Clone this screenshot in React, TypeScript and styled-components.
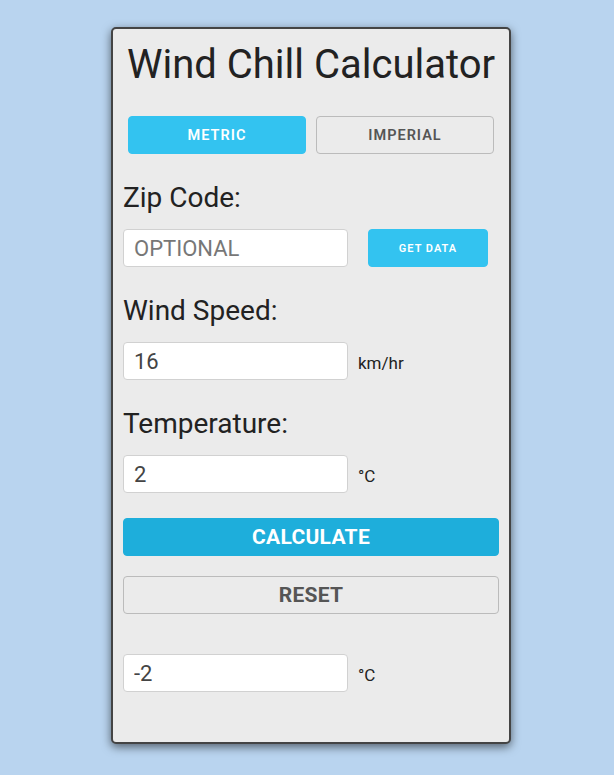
import React, { useState } from 'react';
import styled, { createGlobalStyle } from 'styled-components';

const GlobalStyle = createGlobalStyle`
  html, body {
    margin: 0;
    padding: 0;
    background-color: #b9d4ef;
    font-family: Roboto, 'Liberation Sans', Arial, sans-serif;
  }
  * {
    box-sizing: border-box;
  }
`;

const Page = styled.div`
  min-height: 775px;
  padding: 27px 0 0 111px;
`;

const Card = styled.div`
  width: 400px;
  height: 717px;
  background-color: #ebebeb;
  border: 2px solid #444444;
  border-radius: 5px;
  box-shadow: 0 3px 10px rgba(0, 0, 0, 0.55);
  padding: 11px 10px 0;
  display: flex;
  flex-direction: column;
`;

const Title = styled.h1`
  margin: 0 -10px;
  font-size: 40px;
  font-weight: 400;
  line-height: 50px;
  color: #222222;
  text-align: center;
  white-space: nowrap;
`;

const UnitRow = styled.div`
  display: grid;
  grid-template-columns: 1fr 1fr;
  gap: 10px;
  margin: 26px 5px 0;
`;

const Button = styled.button<{ primary?: boolean }>`
  height: 38px;
  padding: 0;
  border-radius: 4px;
  border: 1px solid ${(p) => (p.primary ? '#33c3f0' : '#bbbbbb')};
  background-color: ${(p) => (p.primary ? '#33c3f0' : 'transparent')};
  color: ${(p) => (p.primary ? '#ffffff' : '#555555')};
  font-family: Roboto, 'Liberation Sans', Arial, sans-serif;
  font-size: 14.5px;
  font-weight: 600;
  letter-spacing: 1px;
  text-transform: uppercase;
  cursor: pointer;
`;

const WideButton = styled(Button)<{ dark?: boolean }>`
  width: 100%;
  font-size: 21px;
  font-weight: 700;
  letter-spacing: 0.3px;
  background-color: ${(p) => (p.dark ? '#1eaedb' : 'transparent')};
  border-color: ${(p) => (p.dark ? '#1eaedb' : '#bbbbbb')};
  color: ${(p) => (p.dark ? '#ffffff' : '#555555')};
`;

const Label = styled.label`
  display: block;
  margin-top: 27px;
  font-size: 28px;
  line-height: 34px;
  color: #222222;
`;

const Row = styled.div<{ top?: number }>`
  display: flex;
  align-items: center;
  margin-top: ${(p) => p.top ?? 14}px;
`;

const Input = styled.input`
  width: 225px;
  height: 38px;
  padding: 6px 10px;
  border: 1px solid #d1d1d1;
  border-radius: 4px;
  background-color: #ffffff;
  font-family: Roboto, 'Liberation Sans', Arial, sans-serif;
  font-size: 22px;
  color: #444444;
  outline: none;
  &::placeholder {
    color: #777777;
  }
`;

const Unit = styled.span`
  margin-left: 10px;
  margin-top: 3px;
  font-size: 17px;
  color: #222222;
`;

const DataButton = styled(Button)`
  width: 120px;
  margin-left: 20px;
  font-size: 11px;
`;

export default function App() {
  const [metric, setMetric] = useState(true);
  const [speed, setSpeed] = useState('16');
  const [temp, setTemp] = useState('2');
  const [zip, setZip] = useState('');
  const [result, setResult] = useState('-2');

  const calculate = () => {
    const v = parseFloat(speed);
    const t = parseFloat(temp);
    if (Number.isNaN(v) || Number.isNaN(t)) return;
    const p = Math.pow(v, 0.16);
    const wc = metric
      ? 13.12 + 0.6215 * t - 11.37 * p + 0.3965 * t * p
      : 35.74 + 0.6215 * t - 35.75 * p + 0.4275 * t * p;
    setResult(String(Math.round(wc)));
  };

  const reset = () => {
    setSpeed('');
    setTemp('');
    setZip('');
    setResult('');
  };

  const tempUnit = metric ? '°C' : '°F';

  return (
    <Page>
      <GlobalStyle />
      <Card>
        <Title>Wind Chill Calculator</Title>
        <UnitRow>
          <Button primary={metric} onClick={() => setMetric(true)}>
            Metric
          </Button>
          <Button primary={!metric} onClick={() => setMetric(false)}>
            Imperial
          </Button>
        </UnitRow>

        <Label>Zip Code:</Label>
        <Row>
          <Input placeholder="OPTIONAL" value={zip} onChange={(e) => setZip(e.target.value)} />
          <DataButton primary>Get Data</DataButton>
        </Row>

        <Label>Wind Speed:</Label>
        <Row>
          <Input value={speed} onChange={(e) => setSpeed(e.target.value)} />
          <Unit>{metric ? 'km/hr' : 'mph'}</Unit>
        </Row>

        <Label>Temperature:</Label>
        <Row>
          <Input value={temp} onChange={(e) => setTemp(e.target.value)} />
          <Unit>{tempUnit}</Unit>
        </Row>

        <Row top={25}>
          <WideButton dark onClick={calculate}>
            Calculate
          </WideButton>
        </Row>
        <Row top={20}>
          <WideButton onClick={reset}>Reset</WideButton>
        </Row>

        <Row top={40}>
          <Input value={result} readOnly />
          <Unit>{tempUnit}</Unit>
        </Row>
      </Card>
    </Page>
  );
}
